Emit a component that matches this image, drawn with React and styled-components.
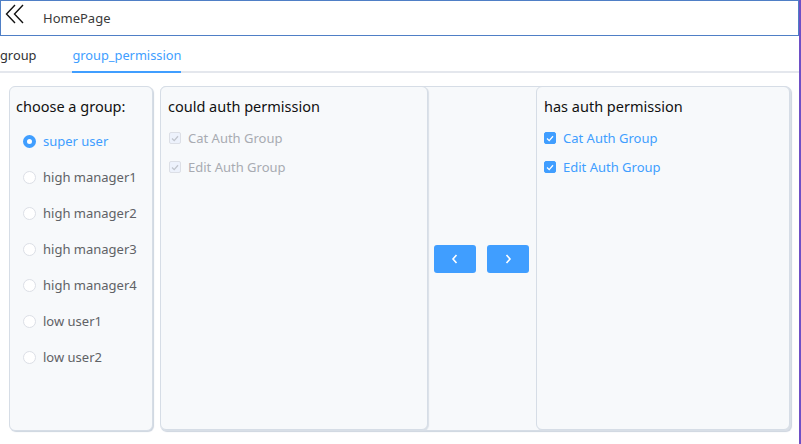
import React, { useState } from 'react';
import styled, { createGlobalStyle } from 'styled-components';

const GlobalStyle = createGlobalStyle`
  html, body {
    margin: 0;
    padding: 0;
    background: #ffffff;
  }
  body {
    font-family: "Noto Sans", "Open Sans", Arial, sans-serif;
    color: #303133;
  }
`;

const Page = styled.div`
  width: 801px;
  height: 444px;
  box-sizing: border-box;
  border-right: 2px solid #6e4fc6;
  overflow: hidden;
`;

const Header = styled.div`
  height: 36px;
  box-sizing: border-box;
  border: 1px solid #4f7fc6;
  display: flex;
  align-items: center;
  gap: 18px;
  padding-left: 4px;
`;

const BackButton = styled.div`
  width: 21px;
  height: 24px;
  display: flex;
  align-items: center;
  margin-top: -8px;
`;

const Title = styled.span`
  font-size: 13px;
  color: #3a3a3a;
  margin-left: -1px;
`;

const Tabs = styled.div`
  display: flex;
  gap: 36px;
  height: 37px;
  box-sizing: border-box;
  border-bottom: 2px solid #e4e7ed;
`;

const Tab = styled.div`
  font-size: 12.8px;
  line-height: 38px;
  height: 37px;
  box-sizing: border-box;
  color: ${(p) => (p.$active ? '#409eff' : '#303133')};
  border-bottom: 2px solid ${(p) => (p.$active ? '#409eff' : 'transparent')};
  margin-bottom: -2px;
`;

const Body = styled.div`
  display: flex;
  gap: 7px;
  padding: 13px 8px 0 9px;
`;

const Card = styled.div`
  height: 345px;
  box-sizing: border-box;
  background: #f7f9fb;
  border: 1px solid #d6dde6;
  border-radius: 6px;
  box-shadow: 1px 1px 1px #cdd5df;
`;

const GroupCard = styled(Card)`
  width: 144px;
  padding: 9px 0 0 6px;
`;

const TransferBox = styled(Card)`
  flex: 1;
  display: flex;
  border-left: none;
`;

const ListCard = styled(Card)`
  flex: ${(p) => (p.$wide ? '0 0 268px' : '1')};
  height: 344px;
  margin-top: -1px;
  padding: 9px 0 0 7px;
  box-shadow: 1px 1px 1px #d9dfe7;
`;

const Middle = styled.div`
  width: 108px;
  box-sizing: border-box;
  display: flex;
  align-items: center;
  justify-content: center;
  gap: 11px;
  padding-right: 2px;
`;

const Heading = styled.div`
  font-size: 14.5px;
  color: #111;
  line-height: 20px;
  margin-bottom: 13px;
`;

const RadioList = styled.div`
  display: flex;
  flex-direction: column;
  gap: 18px;
  padding: 3px 0 0 7px;
`;

const RadioRow = styled.label`
  display: flex;
  align-items: center;
  gap: 7px;
  height: 18px;
  font-size: 13px;
  color: ${(p) => (p.$checked ? '#409eff' : '#606266')};
`;

const RadioDot = styled.span`
  width: 13px;
  height: 13px;
  box-sizing: border-box;
  border-radius: 50%;
  border: ${(p) => (p.$checked ? '4px solid #409eff' : '1px solid #dcdfe6')};
  background: #fff;
`;

const CheckList = styled.div`
  display: flex;
  flex-direction: column;
  gap: 11px;
  padding-left: ${(p) => (p.$disabled ? '1px' : '0')};
`;

const CheckRow = styled.div`
  display: flex;
  align-items: center;
  gap: 7px;
  height: 18px;
  font-size: 13px;
  color: ${(p) => (p.$disabled ? '#a8abb2' : '#409eff')};
`;

const CheckBox = styled.span`
  width: 12px;
  height: 12px;
  box-sizing: border-box;
  border-radius: 2px;
  display: flex;
  align-items: center;
  justify-content: center;
  background: ${(p) => (p.$disabled ? '#edf2fc' : '#409eff')};
  border: 1px solid ${(p) => (p.$disabled ? '#dcdfe6' : '#409eff')};
`;

const MoveButton = styled.button`
  width: 42px;
  height: 28px;
  border: none;
  border-radius: 3px;
  background: #409eff;
  display: flex;
  align-items: center;
  justify-content: center;
  padding: 0;
`;

const Chevrons = () => (
  <svg width="21" height="20" viewBox="0 0 21 20" fill="none" stroke="#111" strokeWidth="1.4">
    <path d="M10 1 L1.5 10 L10 19" />
    <path d="M18 1 L9.5 10 L18 19" />
  </svg>
);

const Tick = ({ color }) => (
  <svg width="8" height="7" viewBox="0 0 8 7" fill="none" stroke={color} strokeWidth="1.3">
    <path d="M1 3.5 L3.2 5.6 L7 1.3" />
  </svg>
);

const Arrow = ({ dir }) => (
  <svg width="8" height="10" viewBox="0 0 8 10" fill="none" stroke="#fff" strokeWidth="1.6">
    <path d={dir === 'left' ? 'M5.5 1 L2 5 L5.5 9' : 'M2.5 1 L6 5 L2.5 9'} />
  </svg>
);

const groups = ['super user', 'high manager1', 'high manager2', 'high manager3', 'high manager4', 'low user1', 'low user2'];
const permissions = ['Cat Auth Group', 'Edit Auth Group'];

const PermissionList = ({ title, disabled, wide }) => (
  <ListCard $wide={wide}>
    <Heading>{title}</Heading>
    <CheckList $disabled={disabled}>
      {permissions.map((p) => (
        <CheckRow key={p} $disabled={disabled}>
          <CheckBox $disabled={disabled}>
            <Tick color={disabled ? '#c0c4cc' : '#fff'} />
          </CheckBox>
          {p}
        </CheckRow>
      ))}
    </CheckList>
  </ListCard>
);

export default function App() {
  const [group, setGroup] = useState('super user');

  return (
    <Page>
      <GlobalStyle />
      <Header>
        <BackButton>
          <Chevrons />
        </BackButton>
        <Title>HomePage</Title>
      </Header>
      <Tabs>
        <Tab>group</Tab>
        <Tab $active>group_permission</Tab>
      </Tabs>
      <Body>
        <GroupCard>
          <Heading>choose a group:</Heading>
          <RadioList>
            {groups.map((g) => (
              <RadioRow key={g} $checked={g === group} onClick={() => setGroup(g)}>
                <RadioDot $checked={g === group} />
                {g}
              </RadioRow>
            ))}
          </RadioList>
        </GroupCard>
        <TransferBox>
          <PermissionList title="could auth permission" disabled wide />
          <Middle>
            <MoveButton>
              <Arrow dir="left" />
            </MoveButton>
            <MoveButton>
              <Arrow dir="right" />
            </MoveButton>
          </Middle>
          <PermissionList title="has auth permission" />
        </TransferBox>
      </Body>
    </Page>
  );
}
